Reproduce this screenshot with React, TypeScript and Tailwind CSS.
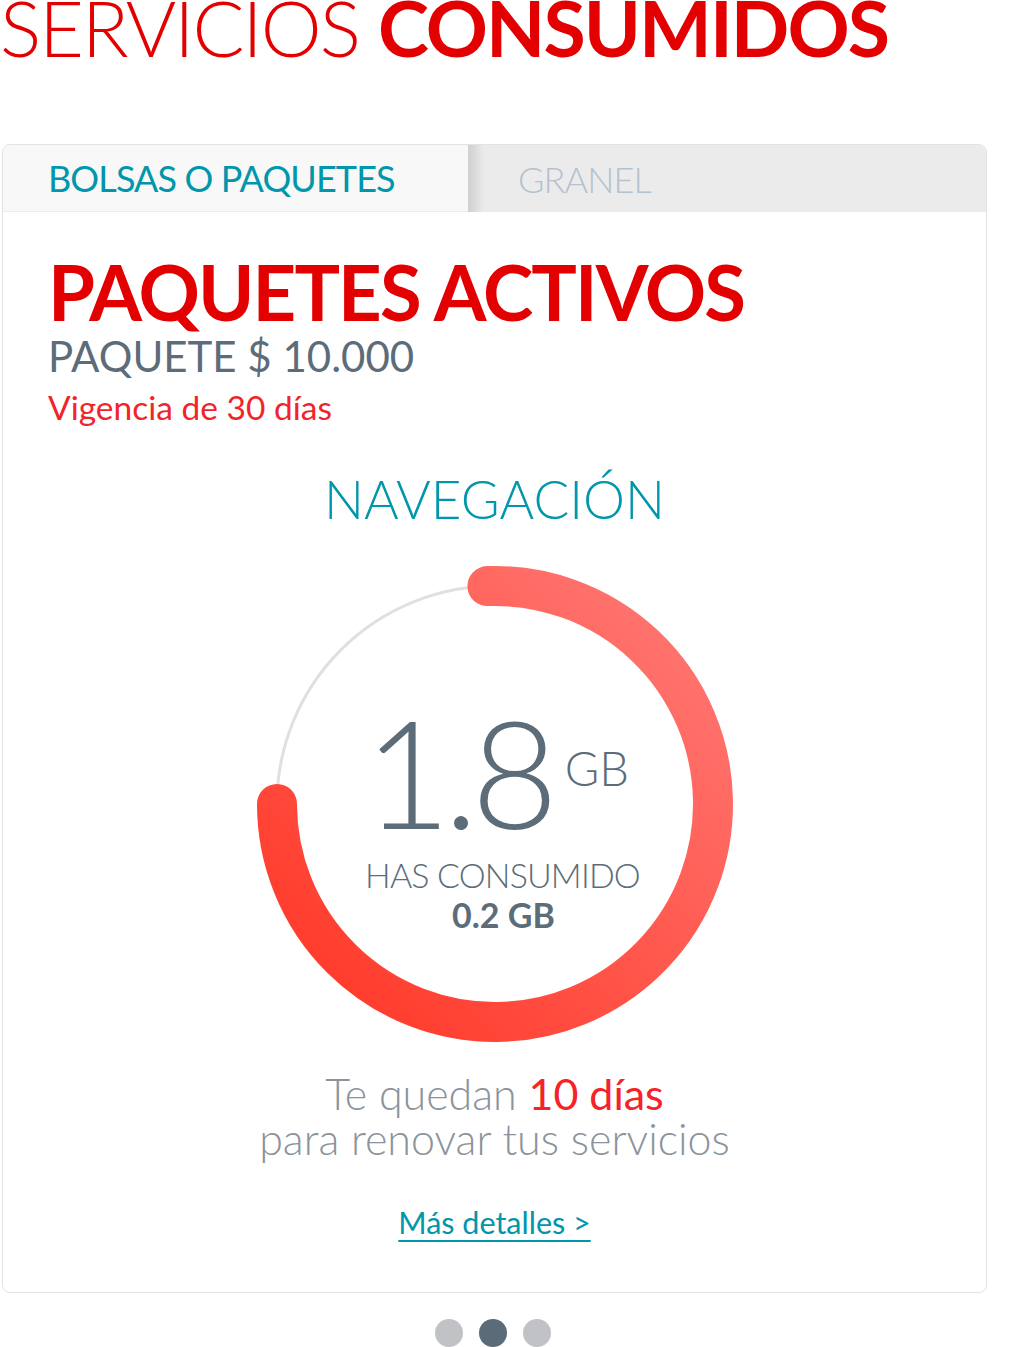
export default function App() {
  const font = { fontFamily: "Lato, 'Noto Sans', sans-serif" }
  return (
    <div className="w-[1033px] min-h-[1347px] bg-white overflow-hidden" style={font}>
      {/* Title */}
      <h1 className="-mt-[11px] text-[77px] leading-none tracking-tight text-[#e30000] whitespace-nowrap">
        <span className="font-light">SERVICIOS </span>
        <span className="font-bold">CONSUMIDOS</span>
      </h1>

      {/* Card */}
      <div className="mt-[78px] ml-[2px] w-[985px] rounded-lg border border-[#e2e2e2] bg-white">
        {/* Tabs */}
        <div className="flex h-[67px] rounded-t-lg overflow-hidden">
          <button className="w-[465px] bg-[#f8f8f8] border-b border-[#ececec] pl-[45px] text-left text-[36px] tracking-tight text-[#0096ab]">
            BOLSAS O PAQUETES
          </button>
          <button className="relative flex-1 bg-[#ebebeb] pl-[50px] text-left text-[36px] font-light tracking-tight text-[#b4c2ce]">
            <span className="absolute left-0 top-0 h-full w-[16px] bg-gradient-to-r from-[#cfcfcf] to-[#ebebeb]" />
            GRANEL
          </button>
        </div>

        {/* Body */}
        <div className="px-[45px] pt-[42px] pb-[52px]">
          <h2 className="text-[76px] leading-none font-bold text-[#e30000] tracking-tight">PAQUETES ACTIVOS</h2>
          <p className="mt-[5px] text-[42px] leading-none text-[#5c6c79]">PAQUETE $ 10.000</p>
          <p className="mt-[14px] text-[33.5px] leading-none text-[#f1242a]">Vigencia de 30 días</p>

          <p className="mt-[47px] text-center text-[53px] leading-none font-light text-[#0096ab]">NAVEGACIÓN</p>

          {/* Ring */}
          <div className="relative mx-auto mt-[39px] h-[480px] w-[480px]">
            <svg width="480" height="480" viewBox="0 0 480 480">
              <defs>
                <linearGradient id="ring" x1="1" y1="0" x2="0" y2="1">
                  <stop offset="0" stopColor="#ff7a76" />
                  <stop offset="1" stopColor="#ff3524" />
                </linearGradient>
              </defs>
              <circle cx="240" cy="240" r="218" fill="none" stroke="#e0e0e0" strokeWidth="3" />
              <path
                d="M 232.4 22.1 A 218 218 0 1 1 22 240"
                fill="none"
                stroke="url(#ring)"
                strokeWidth="40"
                strokeLinecap="round"
              />
            </svg>
            <div className="absolute inset-0 flex flex-col items-center justify-center text-[#5c6c79]">
              <div className="flex items-start pl-[4px] mt-[20px]">
                <span className="text-[150px] leading-none font-light tracking-tighter">1.8</span>
                <span className="ml-[14px] mt-[49px] text-[47px] leading-none font-light">GB</span>
              </div>
              <p className="mt-[12px] pl-[16px] text-[34px] leading-none font-light tracking-tight">HAS CONSUMIDO</p>
              <p className="mt-[6px] pl-[18px] text-[34px] leading-none font-bold">0.2 GB</p>
            </div>
          </div>

          <div className="mt-[27px] text-center text-[43px] leading-[45px] font-light text-[#8b939c]">
            <p>
              Te quedan <span className="font-normal text-[#f5222a]">10 días</span>
            </p>
            <p>para renovar tus servicios</p>
          </div>

          <div className="mt-[46px] text-center">
            <a href="#" className="text-[30.5px] leading-none text-[#0096ab] underline underline-offset-[6px] decoration-2">
              Más detalles &gt;
            </a>
          </div>
        </div>
      </div>

      {/* Pager dots */}
      <div className="mt-[26px] flex w-[985px] justify-center gap-[16px]">
        <span className="h-[28px] w-[28px] rounded-full bg-[#c0c2c6]" />
        <span className="h-[28px] w-[28px] rounded-full bg-[#5b6b78]" />
        <span className="h-[28px] w-[28px] rounded-full bg-[#c0c2c6]" />
      </div>
    </div>
  )
}
